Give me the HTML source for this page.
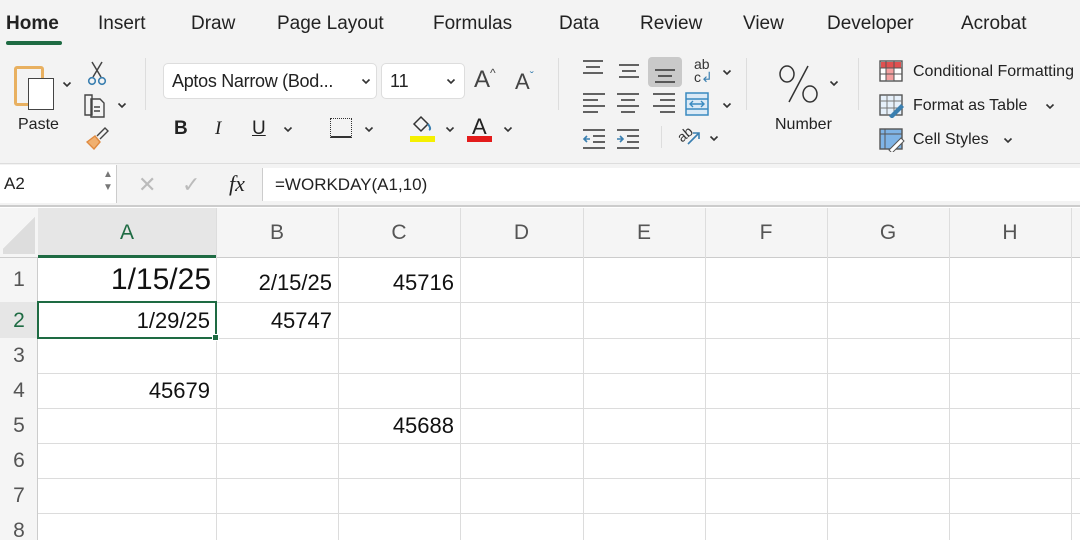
<!DOCTYPE html>
<html><head><meta charset="utf-8"><style>
*{margin:0;padding:0;box-sizing:border-box}
body{width:1080px;height:540px;overflow:hidden;background:#fff;font-family:"Liberation Sans",sans-serif;color:#222;position:relative}
.a{position:absolute}
.tab{position:absolute;top:13px;font-size:19px;color:#222}
.t{position:absolute;font-size:16px;color:#222;white-space:nowrap}
.chev{position:absolute;width:10px;height:7px}
.ch{position:absolute;top:208px;height:50px;font-size:21px;color:#555;text-align:center;line-height:50px}
.rh{position:absolute;left:0;width:38px;font-size:21px;color:#555;text-align:center}
.v{position:absolute;border-left:1px solid #dcdcdc;top:258px;bottom:0}
.hl{position:absolute;left:38px;right:0;border-top:1px solid #dcdcdc}
.c{position:absolute;font-size:22px;color:#111;text-align:right}
</style></head><body>
<svg width="0" height="0" style="position:absolute"><defs><symbol id="cv" viewBox="0 0 10 7"><path d="M1.5 1.5L5 5L8.5 1.5" fill="none" stroke="#333" stroke-width="1.6"/></symbol></defs></svg>
<div class="a" style="left:0;top:0;width:1080px;height:163px;background:#f3f3f3"></div>
<div class="tab" style="left:6px;font-weight:bold">Home</div>
<div class="a" style="left:6px;top:41px;width:56px;height:4px;background:#1e6b43;border-radius:2px"></div>
<div class="tab" style="left:98px">Insert</div>
<div class="tab" style="left:191px">Draw</div>
<div class="tab" style="left:277px">Page Layout</div>
<div class="tab" style="left:433px">Formulas</div>
<div class="tab" style="left:559px">Data</div>
<div class="tab" style="left:640px">Review</div>
<div class="tab" style="left:743px">View</div>
<div class="tab" style="left:827px">Developer</div>
<div class="tab" style="left:961px">Acrobat</div>
<!-- paste -->
<div class="a" style="left:14px;top:66px;width:30px;height:40px;border:3px solid #e8b060;border-radius:3px"></div>
<div class="a" style="left:28px;top:78px;width:26px;height:32px;background:#fff;border:1.5px solid #444"></div>
<svg class="chev" style="left:62px;top:81px"><use href="#cv"/></svg>
<div class="t" style="left:18px;top:116px">Paste</div>
<svg class="a" style="left:86px;top:60px" width="22" height="26" viewBox="0 0 22 26"><path d="M6 2L15 17M16 2L7 17" stroke="#444" stroke-width="1.5" fill="none"/><circle cx="6" cy="21" r="3.3" stroke="#3a7fb0" stroke-width="1.6" fill="none"/><circle cx="16" cy="21" r="3.3" stroke="#3a7fb0" stroke-width="1.6" fill="none"/></svg>
<svg class="a" style="left:82px;top:91px" width="26" height="28" viewBox="0 0 26 28"><path d="M3 4h7v20H3z M9 8h9l4 4v14H9z M12 16h6M12 20h6" stroke="#444" stroke-width="1.4" fill="none"/></svg>
<svg class="chev" style="left:117px;top:102px"><use href="#cv"/></svg>
<svg class="a" style="left:84px;top:126px" width="26" height="24" viewBox="0 0 26 24"><path d="M3 16l8-6 5 6-6 7z" fill="#f0b070" stroke="#e08a40" stroke-width="1.4"/><path d="M13 10l8-8 3 3-8 8" stroke="#444" stroke-width="1.4" fill="none"/></svg>
<div class="a" style="left:145px;top:58px;height:52px;border-left:1px solid #ddd"></div>
<!-- font -->
<div class="a" style="left:163px;top:63px;width:214px;height:36px;background:#fff;border:1px solid #ddd;border-radius:5px"></div>
<div class="t" style="left:172px;top:71px;font-size:18px;letter-spacing:-0.3px">Aptos Narrow (Bod...</div>
<svg class="chev" style="left:361px;top:78px"><use href="#cv"/></svg>
<div class="a" style="left:381px;top:63px;width:84px;height:36px;background:#fff;border:1px solid #ddd;border-radius:5px"></div>
<div class="t" style="left:390px;top:71px;font-size:18px">11</div>
<svg class="chev" style="left:446px;top:78px"><use href="#cv"/></svg>
<div class="t" style="left:474px;top:66px;font-size:24px;color:#444;font-weight:300">A<span style="font-size:12px;vertical-align:top">^</span></div>
<div class="t" style="left:515px;top:69px;font-size:22px;color:#444">A<span style="font-size:12px;vertical-align:top;color:#3a7fb0">ˇ</span></div>
<div class="t" style="left:174px;top:118px;font-size:19px;font-weight:bold">B</div>
<div class="t" style="left:215px;top:118px;font-size:19px;font-style:italic;font-family:'Liberation Serif',serif">I</div>
<div class="t" style="left:252px;top:118px;font-size:19px;text-decoration:underline">U</div>
<svg class="chev" style="left:283px;top:126px"><use href="#cv"/></svg>
<div class="a" style="left:330px;top:118px;width:22px;height:20px;border:1px dotted #333;border-bottom:2px solid #333"></div>
<svg class="chev" style="left:364px;top:126px"><use href="#cv"/></svg>
<svg class="a" style="left:410px;top:113px" width="26" height="22" viewBox="0 0 26 22"><path d="M4 11l7-7 7 7-7 7z" fill="none" stroke="#333" stroke-width="1.5"/><path d="M18 11c2 3 3 5 1 6" stroke="#3a7fb0" stroke-width="2" fill="none"/></svg>
<div class="a" style="left:410px;top:136px;width:25px;height:6px;background:#f5f000"></div>
<svg class="chev" style="left:445px;top:126px"><use href="#cv"/></svg>
<div class="t" style="left:472px;top:114px;font-size:22px">A</div>
<div class="a" style="left:467px;top:136px;width:25px;height:6px;background:#e31b1b"></div>
<svg class="chev" style="left:503px;top:126px"><use href="#cv"/></svg>
<div class="a" style="left:558px;top:58px;height:52px;border-left:1px solid #ddd"></div>
<!-- align -->
<div class="a" style="left:648px;top:57px;width:34px;height:30px;background:#c9c9c9;border-radius:4px"></div>
<svg class="a" style="left:580px;top:58px" width="110" height="100" viewBox="0 0 110 100" stroke="#333" stroke-width="1.6" fill="none">
<path d="M3 3h20M6 9h14M3 15h20"/>
<path d="M39 7h20M42 13h14M39 19h20"/>
<path d="M75 12h20M78 18h14M75 24h20"/>
<path d="M3 36h22M3 42h15M3 48h22M3 54h15"/>
<path d="M37 36h22M41 42h14M37 48h22M41 54h14"/>
<path d="M73 36h22M80 42h15M73 48h22M80 54h15"/>
<path d="M3 72h22M13 78h12M13 84h12M3 90h22" /><path d="M4 81h6M7 78l-3 3 3 3" stroke="#3a7fb0"/>
<path d="M37 72h22M47 78h12M47 84h12M37 90h22"/><path d="M37 81h6M40 78l3 3-3 3" stroke="#3a7fb0"/>
</svg>
<div class="t" style="left:694px;top:58px;font-size:14px;line-height:13px;color:#333">ab<br>c<span style="color:#3a7fb0">↲</span></div>
<svg class="chev" style="left:722px;top:69px"><use href="#cv"/></svg>
<svg class="a" style="left:685px;top:92px" width="24" height="24" viewBox="0 0 24 24"><rect x="1" y="1" width="22" height="22" fill="#dbeaf6" stroke="#3a8ac0" stroke-width="1.5"/><path d="M1 7h22M1 17h22M6 12h12M8 9l-3 3 3 3M16 9l3 3-3 3" stroke="#3a8ac0" stroke-width="1.4" fill="none"/></svg>
<svg class="chev" style="left:722px;top:102px"><use href="#cv"/></svg>
<div class="a" style="left:661px;top:126px;height:22px;border-left:1px solid #ddd"></div>
<div class="t" style="left:677px;top:126px;font-size:14px;color:#333;transform:rotate(-40deg)">ab</div>
<svg class="a" style="left:686px;top:130px" width="16" height="16" viewBox="0 0 16 16"><path d="M2 14L13 3M7 3h6v6" stroke="#3a7fb0" stroke-width="1.6" fill="none"/></svg>
<svg class="chev" style="left:709px;top:135px"><use href="#cv"/></svg>
<div class="a" style="left:746px;top:58px;height:52px;border-left:1px solid #ddd"></div>
<svg class="a" style="left:778px;top:64px" width="42" height="42" viewBox="0 0 42 42" fill="none" stroke="#333" stroke-width="1.5"><ellipse cx="9" cy="10" rx="7" ry="8"/><ellipse cx="32" cy="30" rx="7" ry="8"/><path d="M30 2L11 38"/></svg>
<svg class="chev" style="left:829px;top:80px"><use href="#cv"/></svg>
<div class="t" style="left:775px;top:116px">Number</div>
<div class="a" style="left:858px;top:58px;height:52px;border-left:1px solid #ddd"></div>
<svg class="a" style="left:879px;top:60px" width="24" height="22" viewBox="0 0 24 22"><rect x="1" y="1" width="22" height="20" fill="#fff" stroke="#555" stroke-width="1.4"/><rect x="2" y="2" width="20" height="6" fill="#e05050"/><rect x="7" y="8" width="8" height="12" fill="#f4a0a0"/><path d="M1 8h22M1 14h22M7 1v20M15 1v20" stroke="#555"/></svg>
<div class="t" style="left:913px;top:63px">Conditional Formatting</div>
<svg class="a" style="left:879px;top:94px" width="26" height="24" viewBox="0 0 26 24"><rect x="1" y="1" width="22" height="20" fill="#e6f0fa" stroke="#555" stroke-width="1.4"/><path d="M1 7h22M1 14h22M8 1v20M15 1v20" stroke="#777"/><path d="M10 22l12-12 3 3-12 12z" fill="#3a7fb0"/></svg>
<div class="t" style="left:913px;top:97px">Format as Table</div>
<svg class="chev" style="left:1045px;top:103px"><use href="#cv"/></svg>
<svg class="a" style="left:879px;top:128px" width="26" height="24" viewBox="0 0 26 24"><rect x="1" y="1" width="22" height="20" fill="#7fb4e6" stroke="#555" stroke-width="1.4"/><path d="M1 6h22M6 1v20" stroke="#555"/><path d="M10 22l12-12 3 3-12 12z" fill="#fff" stroke="#555"/></svg>
<div class="t" style="left:913px;top:131px">Cell Styles</div>
<svg class="chev" style="left:1003px;top:137px"><use href="#cv"/></svg>
<!-- formula bar -->
<div class="a" style="left:0;top:163px;width:1080px;height:44px;background:#f3f3f3;border-top:1px solid #ddd;border-bottom:2px solid #ccc"></div>
<div class="a" style="left:0;top:165px;width:117px;height:38px;background:#fff;border-right:1px solid #ccc"></div>
<div class="t" style="left:4px;top:174px;font-size:17px">A2</div>
<div class="t" style="left:103px;top:168px;font-size:10px;line-height:13px;color:#777">▲<br>▼</div>
<div class="t" style="left:138px;top:172px;font-size:22px;color:#bbb">✕</div>
<div class="t" style="left:182px;top:172px;font-size:22px;color:#bbb">✓</div>
<div class="t" style="left:229px;top:171px;font-size:22px;font-style:italic;font-family:'Liberation Serif',serif">fx</div>
<div class="a" style="left:262px;top:168px;width:818px;height:33px;background:#fff;border-left:1px solid #ccc"></div>
<div class="t" style="left:275px;top:175px;font-size:17px">=WORKDAY(A1,10)</div>
<!-- grid headers -->
<div class="a" style="left:0;top:208px;width:1080px;height:50px;background:#f5f5f5;border-bottom:1px solid #ccc"></div>
<div class="a" style="left:0;top:258px;width:38px;height:282px;background:#f5f5f5;border-right:1px solid #ccc"></div>
<div class="a" style="left:3px;top:212px;width:32px;height:42px;background:linear-gradient(135deg,transparent 50%,#ddd 50%)"></div>
<div class="a" style="left:38px;top:208px;width:178px;height:50px;background:#e6e6e6;border-bottom:3px solid #1e6b43"></div>
<div class="ch" style="left:38px;width:178px;color:#1e6b43">A</div>
<div class="ch" style="left:216px;width:122px">B</div>
<div class="ch" style="left:338px;width:122px">C</div>
<div class="ch" style="left:460px;width:123px">D</div>
<div class="ch" style="left:583px;width:122px">E</div>
<div class="ch" style="left:705px;width:122px">F</div>
<div class="ch" style="left:827px;width:122px">G</div>
<div class="ch" style="left:949px;width:122px">H</div>
<div class="a" style="left:216px;top:208px;height:50px;border-left:1px solid #ddd"></div>
<div class="a" style="left:338px;top:208px;height:50px;border-left:1px solid #ddd"></div>
<div class="a" style="left:460px;top:208px;height:50px;border-left:1px solid #ddd"></div>
<div class="a" style="left:583px;top:208px;height:50px;border-left:1px solid #ddd"></div>
<div class="a" style="left:705px;top:208px;height:50px;border-left:1px solid #ddd"></div>
<div class="a" style="left:827px;top:208px;height:50px;border-left:1px solid #ddd"></div>
<div class="a" style="left:949px;top:208px;height:50px;border-left:1px solid #ddd"></div>
<div class="a" style="left:1071px;top:208px;height:50px;border-left:1px solid #ddd"></div>
<div class="v" style="left:216px"></div><div class="v" style="left:338px"></div><div class="v" style="left:460px"></div>
<div class="v" style="left:583px"></div><div class="v" style="left:705px"></div><div class="v" style="left:827px"></div>
<div class="v" style="left:949px"></div><div class="v" style="left:1071px"></div>
<div class="hl" style="top:302px"></div><div class="hl" style="top:338px"></div><div class="hl" style="top:373px"></div>
<div class="hl" style="top:408px"></div><div class="hl" style="top:443px"></div><div class="hl" style="top:478px"></div>
<div class="hl" style="top:513px"></div>
<div class="rh" style="top:268px">1</div>
<div class="a" style="left:0;top:302px;width:38px;height:36px;background:#e6e6e6"></div>
<div class="rh" style="top:309px;color:#1e6b43">2</div>
<div class="rh" style="top:344px">3</div>
<div class="rh" style="top:379px">4</div>
<div class="rh" style="top:414px">5</div>
<div class="rh" style="top:449px">6</div>
<div class="rh" style="top:484px">7</div>
<div class="rh" style="top:519px">8</div>
<div class="c" style="left:40px;width:171px;top:263px;font-size:30px">1/15/25</div>
<div class="c" style="left:218px;width:114px;top:270px">2/15/25</div>
<div class="c" style="left:340px;width:114px;top:270px">45716</div>
<div class="c" style="left:40px;width:170px;top:308px">1/29/25</div>
<div class="c" style="left:218px;width:114px;top:308px">45747</div>
<div class="c" style="left:40px;width:170px;top:378px">45679</div>
<div class="c" style="left:340px;width:114px;top:413px">45688</div>
<div class="a" style="left:37px;top:301px;width:180px;height:38px;border:2px solid #1e6b43"></div>
<div class="a" style="left:212px;top:334px;width:7px;height:7px;background:#1e6b43;border:1px solid #fff"></div>
</body></html>
